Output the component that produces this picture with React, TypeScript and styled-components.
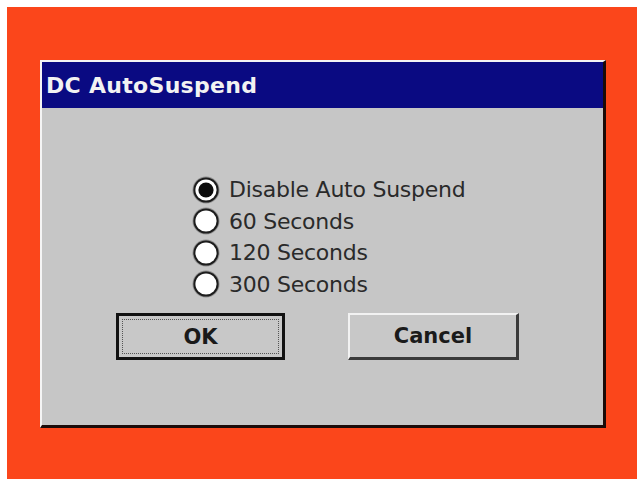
import styled, { createGlobalStyle } from 'styled-components';

const GlobalStyle = createGlobalStyle`
  html, body {
    margin: 0;
    padding: 0;
    background: #ffffff;
  }
  body {
    font-family: "DejaVu Sans", "Liberation Sans", sans-serif;
  }
`;

const options = ['Disable Auto Suspend', '60 Seconds', '120 Seconds', '300 Seconds'];

const RadioMark = ({ checked }: { checked: boolean }) => (
  <svg width="28" height="28" viewBox="0 0 28 28">
    <circle cx="14" cy="14" r="13.5" fill="#8e8e8e" />
    <circle cx="14" cy="14" r="12.6" fill="#1c1c1c" />
    <circle cx="14" cy="14" r="10.6" fill="#ffffff" />
    {checked && <circle cx="14" cy="14" r="7.6" fill="#0c0c0c" />}
  </svg>
);

const App = () => {
  return (
    <>
      <GlobalStyle />
      <Page>
        <Backdrop>
          <Dialog>
            <TitleBar>DC AutoSuspend</TitleBar>
            <Body>
              <RadioList>
                {options.map((label, i) => (
                  <RadioRow key={label}>
                    <RadioMark checked={i === 0} />
                    <RadioLabel>{label}</RadioLabel>
                  </RadioRow>
                ))}
              </RadioList>
              <ButtonRow>
                <Button $default>
                  <FocusRect>OK</FocusRect>
                </Button>
                <Button>Cancel</Button>
              </ButtonRow>
            </Body>
          </Dialog>
        </Backdrop>
      </Page>
    </>
  );
};

export default App;

const Page = styled.div`
  width: 637px;
  height: 479px;
  padding: 7px 0 0 7px;
  box-sizing: border-box;
  background: #ffffff;
  overflow: hidden;
`;

const Backdrop = styled.div`
  width: 630px;
  height: 472px;
  background: #fb461b;
  padding: 53px 0 0 33px;
  box-sizing: border-box;
`;

const Dialog = styled.div`
  width: 566px;
  height: 368px;
  box-sizing: border-box;
  background: #c6c6c6;
  border-top: 2px solid #f4f4f4;
  border-left: 2px solid #f4f4f4;
  border-right: 3px solid #1a0a08;
  border-bottom: 3px solid #1a0a08;
  display: flex;
  flex-direction: column;
`;

const TitleBar = styled.div`
  height: 46px;
  background: #0a0a82;
  color: #f2f2f2;
  font-weight: bold;
  font-size: 22px;
  letter-spacing: 0.3px;
  line-height: 48px;
  padding-left: 4px;
  white-space: nowrap;
`;

const Body = styled.div`
  flex: 1;
  padding: 66px 0 0 0;
  display: flex;
  flex-direction: column;
`;

const RadioList = styled.div`
  display: flex;
  flex-direction: column;
  padding-left: 150px;
`;

const RadioRow = styled.div`
  height: 31.5px;
  display: flex;
  align-items: center;
  gap: 9px;
`;

const RadioLabel = styled.span`
  font-size: 22px;
  letter-spacing: -0.25px;
  color: #2a2a2a;
  white-space: nowrap;
`;

const ButtonRow = styled.div`
  display: flex;
  gap: 63px;
  padding-left: 74px;
  margin-top: 13px;
`;

const Button = styled.div<{ $default?: boolean }>`
  width: ${(p) => (p.$default ? '169px' : '171px')};
  height: 47px;
  box-sizing: border-box;
  display: flex;
  align-items: center;
  justify-content: center;
  font-weight: bold;
  font-size: 21px;
  color: #1a1a1a;
  background: #c8c8c8;
  ${(p) =>
    p.$default
      ? `border: 3px solid #111111; padding: 3px;`
      : `border-top: 2px solid #f2f2f2; border-left: 2px solid #f2f2f2;
         border-right: 3px solid #3a3a3a; border-bottom: 3px solid #3a3a3a;`}
`;

const FocusRect = styled.div`
  width: 100%;
  height: 100%;
  box-sizing: border-box;
  border: 1px dotted #555555;
  display: flex;
  align-items: center;
  justify-content: center;
`;
